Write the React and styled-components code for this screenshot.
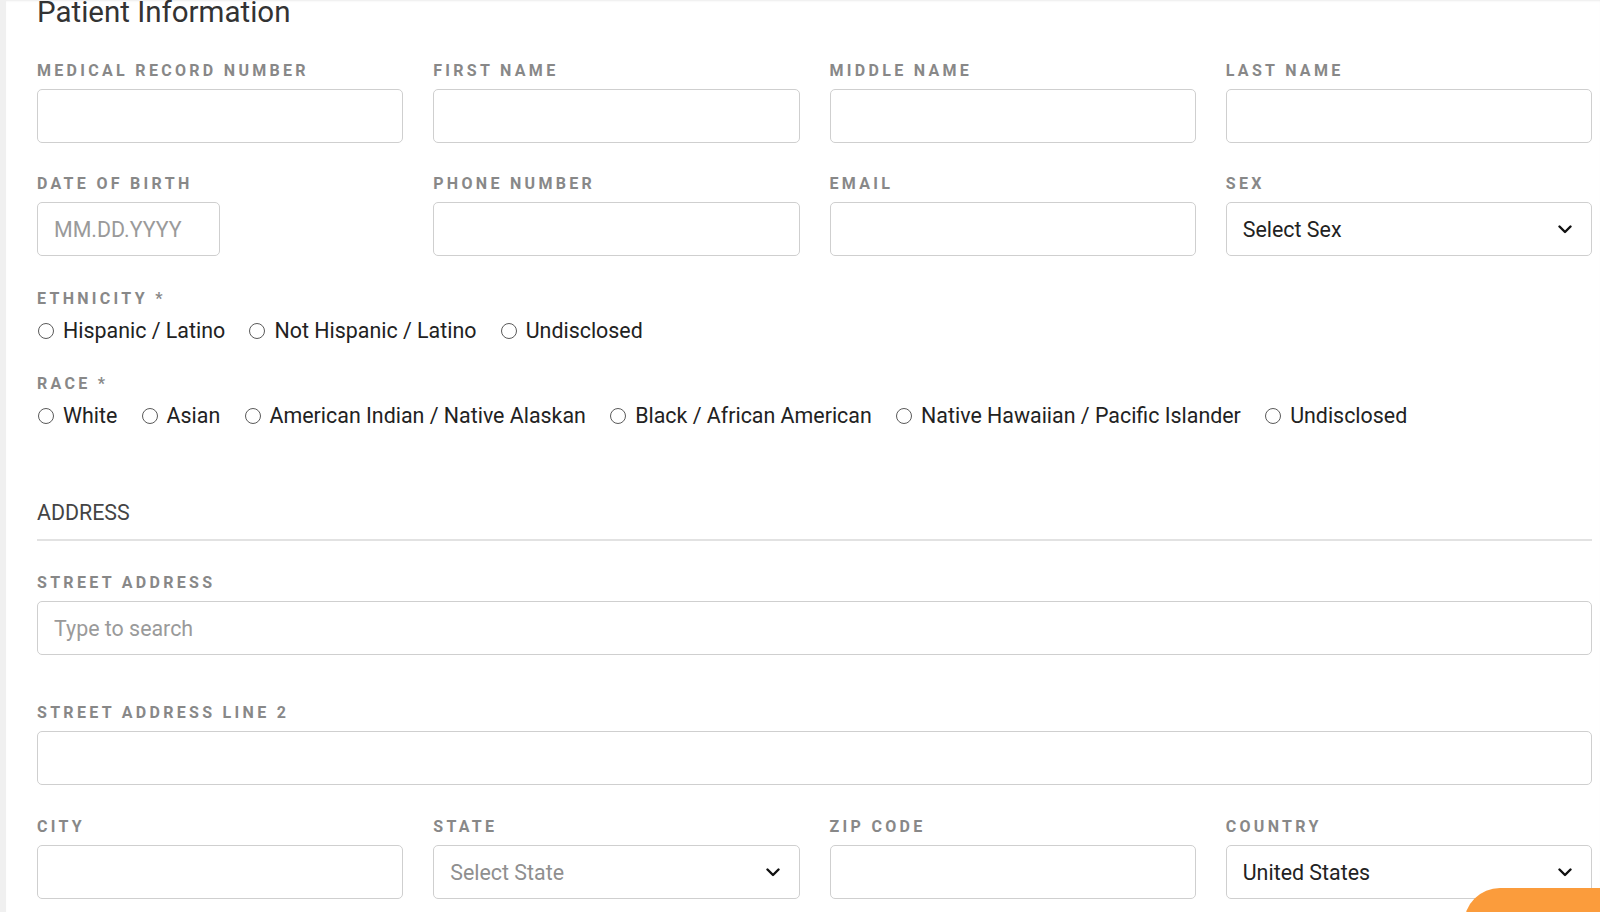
import React from "react";
import styled, { createGlobalStyle } from "styled-components";

const Global = createGlobalStyle`
  html, body { margin: 0; padding: 0; background: #f0f0f0; }
  body { font-family: Roboto, "Liberation Sans", Arial, sans-serif; overflow: hidden; }
  * { box-sizing: border-box; }
`;

const Shell = styled.div`
  display: flex;
  min-height: 912px;
  padding-left: 6px;
`;

const Panel = styled.main`
  flex: 1;
  background: #fff;
  padding: 0 8px 0 31px;
  box-shadow: inset 0 2px 2px -1px rgba(0, 0, 0, 0.08);
  overflow: hidden;
`;

const Title = styled.h1`
  margin: -4px 0 33px;
  font-size: 29.5px;
  line-height: 32px;
  font-weight: 400;
  color: #333;
`;

const Grid = styled.div`
  display: grid;
  grid-template-columns: repeat(4, 1fr);
  column-gap: 30px;
  row-gap: 31px;
`;

const Field = styled.div`
  display: flex;
  flex-direction: column;
  margin-bottom: ${(p) => p.$mb || 0}px;
`;

const Label = styled.label`
  display: block;
  font-size: 16px;
  line-height: 20px;
  font-weight: 700;
  letter-spacing: 3.3px;
  text-transform: uppercase;
  color: #888;
  margin-bottom: ${(p) => (p.$tight ? 10 : 8)}px;
  white-space: nowrap;
`;

const Input = styled.input`
  width: ${(p) => (p.$narrow ? "50%" : "100%")};
  height: 54px;
  border: 1.5px solid #cfcfcf;
  border-radius: 5px;
  padding: 0 16px;
  font-family: inherit;
  font-size: 21.4px;
  color: #222;
  background: #fff;
  outline: none;
  &::placeholder { color: #9a9a9a; }
`;

const SelectBox = styled.div`
  width: 100%;
  height: 54px;
  border: 1.5px solid #cfcfcf;
  border-radius: 5px;
  padding: 0 19px 0 16px;
  display: flex;
  align-items: center;
  justify-content: space-between;
  font-size: 21.4px;
  color: ${(p) => (p.$placeholder ? "#8f8f8f" : "#222")};
  background: #fff;
`;

const Section = styled.section`
  margin-top: ${(p) => p.$mt}px;
`;

const RadioRow = styled.div`
  display: flex;
  align-items: center;
  height: 24px;
  gap: 23.3px;
`;

const RadioOption = styled.label`
  display: flex;
  align-items: center;
  gap: 9px;
  font-size: 21.4px;
  line-height: 24px;
  color: #222;
  white-space: nowrap;
`;

const RadioDot = styled.input.attrs({ type: "radio" })`
  appearance: none;
  -webkit-appearance: none;
  width: 16px;
  height: 16px;
  margin: 0 0 1px 1px;
  border: 1px solid #5a5a5a;
  border-radius: 50%;
  background: #fff;
`;

const SectionHead = styled.h2`
  margin: 73px 0 32px;
  padding-bottom: 14px;
  border-bottom: 2px solid #e2e2e2;
  font-size: 21.4px;
  line-height: 24px;
  font-weight: 400;
  color: #444;
  text-transform: uppercase;
`;

const Fab = styled.button`
  position: fixed;
  left: 1464px;
  top: 888px;
  width: 220px;
  height: 72px;
  border: none;
  border-radius: 36px;
  background: #fb9c3c;
`;

const Chevron = () => (
  <svg width="14" height="9" viewBox="0 0 14 9" fill="none">
    <polyline points="1.5,1.5 7,7 12.5,1.5" stroke="#111" strokeWidth="2.4" strokeLinecap="round" strokeLinejoin="round" />
  </svg>
);

const Select = ({ value, placeholder }) => (
  <SelectBox $placeholder={placeholder}>
    <span>{value}</span>
    <Chevron />
  </SelectBox>
);

const Radios = ({ name, options }) => (
  <RadioRow>
    {options.map((o) => (
      <RadioOption key={o}>
        <RadioDot name={name} />
        {o}
      </RadioOption>
    ))}
  </RadioRow>
);

export default function App() {
  return (
    <>
      <Global />
      <Shell>
        <Panel>
          <Title>Patient Information</Title>
          <Grid>
            <Field>
              <Label>Medical Record Number</Label>
              <Input />
            </Field>
            <Field>
              <Label>First Name</Label>
              <Input />
            </Field>
            <Field>
              <Label>Middle Name</Label>
              <Input />
            </Field>
            <Field>
              <Label>Last Name</Label>
              <Input />
            </Field>
            <Field>
              <Label>Date of Birth</Label>
              <Input $narrow placeholder="MM.DD.YYYY" />
            </Field>
            <Field>
              <Label>Phone Number</Label>
              <Input />
            </Field>
            <Field>
              <Label>Email</Label>
              <Input />
            </Field>
            <Field>
              <Label>Sex</Label>
              <Select value="Select Sex" />
            </Field>
          </Grid>

          <Section $mt={33}>
            <Label $tight>Ethnicity *</Label>
            <Radios name="eth" options={["Hispanic / Latino", "Not Hispanic / Latino", "Undisclosed"]} />
          </Section>
          <Section $mt={31}>
            <Label $tight>Race *</Label>
            <Radios
              name="race"
              options={[
                "White",
                "Asian",
                "American Indian / Native Alaskan",
                "Black / African American",
                "Native Hawaiian / Pacific Islander",
                "Undisclosed",
              ]}
            />
          </Section>

          <SectionHead>Address</SectionHead>
          <Field $mb={48}>
            <Label>Street Address</Label>
            <Input placeholder="Type to search" />
          </Field>
          <Field $mb={32}>
            <Label>Street Address Line 2</Label>
            <Input />
          </Field>
          <Grid>
            <Field>
              <Label>City</Label>
              <Input />
            </Field>
            <Field>
              <Label>State</Label>
              <Select value="Select State" placeholder />
            </Field>
            <Field>
              <Label>Zip Code</Label>
              <Input />
            </Field>
            <Field>
              <Label>Country</Label>
              <Select value="United States" />
            </Field>
          </Grid>
        </Panel>
      </Shell>
      <Fab aria-label="Save" />
    </>
  );
}
